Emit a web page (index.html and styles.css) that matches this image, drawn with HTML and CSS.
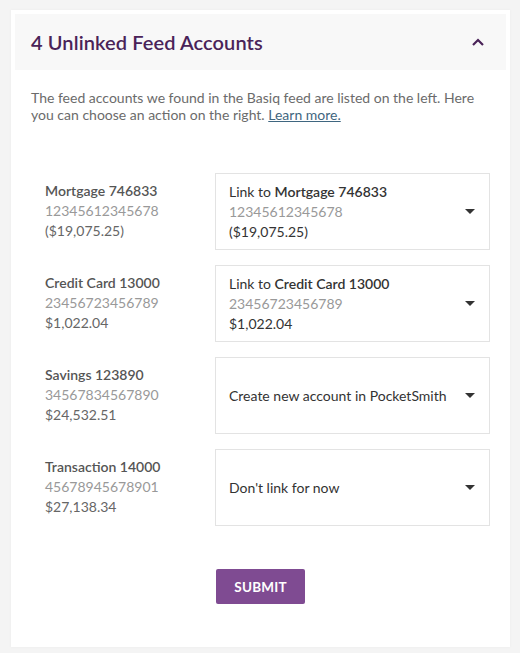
FILE: index.html
```html
<!DOCTYPE html>
<html lang="en">
<head>
  <meta charset="UTF-8">
  <meta name="viewport" content="width=device-width, initial-scale=1.0">
  <title>Unlinked Feed Accounts</title>
  <link rel="stylesheet" href="styles.css">
</head>
<body>
  <div class="panel">
    <div class="panel-header">
      <h2>4 Unlinked Feed Accounts</h2>
      <svg class="chevron" width="12" height="8" viewBox="0 0 12 8"><path d="M1 7 L6 2 L11 7" fill="none" stroke="#4a2358" stroke-width="2.2"/></svg>
    </div>
    <p class="intro">The feed accounts we found in the Basiq feed are listed on the left. Here you can choose an action on the right. <a href="#">Learn more.</a></p>

    <div class="accounts">
      <div class="account">
        <div class="feed">
          <div class="name">Mortgage 746833</div>
          <div class="number">12345612345678</div>
          <div class="amount">($19,075.25)</div>
        </div>
        <div class="select">
          <div class="option">
            <div>Link to <b>Mortgage 746833</b></div>
            <div class="number">12345612345678</div>
            <div>($19,075.25)</div>
          </div>
          <span class="caret"></span>
        </div>
      </div>

      <div class="account">
        <div class="feed">
          <div class="name">Credit Card 13000</div>
          <div class="number">23456723456789</div>
          <div class="amount">$1,022.04</div>
        </div>
        <div class="select">
          <div class="option">
            <div>Link to <b>Credit Card 13000</b></div>
            <div class="number">23456723456789</div>
            <div>$1,022.04</div>
          </div>
          <span class="caret"></span>
        </div>
      </div>

      <div class="account">
        <div class="feed">
          <div class="name">Savings 123890</div>
          <div class="number">34567834567890</div>
          <div class="amount">$24,532.51</div>
        </div>
        <div class="select">
          <div class="option">Create new account in PocketSmith</div>
          <span class="caret"></span>
        </div>
      </div>

      <div class="account">
        <div class="feed">
          <div class="name">Transaction 14000</div>
          <div class="number">45678945678901</div>
          <div class="amount">$27,138.34</div>
        </div>
        <div class="select">
          <div class="option">Don't link for now</div>
          <span class="caret"></span>
        </div>
      </div>
    </div>

    <div class="actions">
      <button class="submit">SUBMIT</button>
    </div>
  </div>
</body>
</html>
```

FILE: styles.css
```css
body {
  margin: 0;
  padding: 10px 10px 10px 11px;
  background-color: #f4f4f4;
  font-family: Lato, "Open Sans", sans-serif;
  font-size: 14px;
  color: #555;
}

.panel {
  width: 491px;
  padding: 4px;
  background-color: #fff;
  box-shadow: 0 0 3px rgba(0, 0, 0, 0.04);
}

.panel-header {
  display: flex;
  align-items: center;
  justify-content: space-between;
  height: 56px;
  padding: 0 22px 0 16px;
  background-color: #f8f8f8;
}

.panel-header h2 {
  margin: 0;
  font-size: 20px;
  font-weight: 600;
  letter-spacing: 0.1px;
  color: #4a2358;
}

.chevron {
  display: block;
}

.intro {
  margin: 19px 16px 0 16px;
  line-height: 17px;
  color: #6b6b6b;
}

.intro a {
  color: #3f6680;
}

.accounts {
  display: flex;
  flex-direction: column;
  gap: 15px;
  margin: 50px 16px 0 30px;
}

.account {
  display: flex;
}

.feed {
  width: 170px;
  padding-top: 8px;
  line-height: 20px;
}

.name {
  font-weight: 600;
  color: #555;
}

.number {
  color: #999;
}

.amount {
  color: #666;
}

.select {
  flex: 1;
  display: flex;
  align-items: center;
  justify-content: space-between;
  height: 75px;
  padding: 0 14px 0 13px;
  border: 1px solid #e3e3e3;
  line-height: 20px;
  color: #333;
}

.select b {
  font-weight: 600;
}

.caret {
  width: 0;
  height: 0;
  border-left: 5px solid transparent;
  border-right: 5px solid transparent;
  border-top: 5px solid #333;
}

.actions {
  padding: 43px 0 39px 201px;
}

.submit {
  width: 89px;
  height: 35px;
  border: none;
  border-radius: 2px;
  background-color: #7f4b92;
  color: #fff;
  font-family: inherit;
  font-size: 13.5px;
  font-weight: 700;
  letter-spacing: 0.2px;
}
```
